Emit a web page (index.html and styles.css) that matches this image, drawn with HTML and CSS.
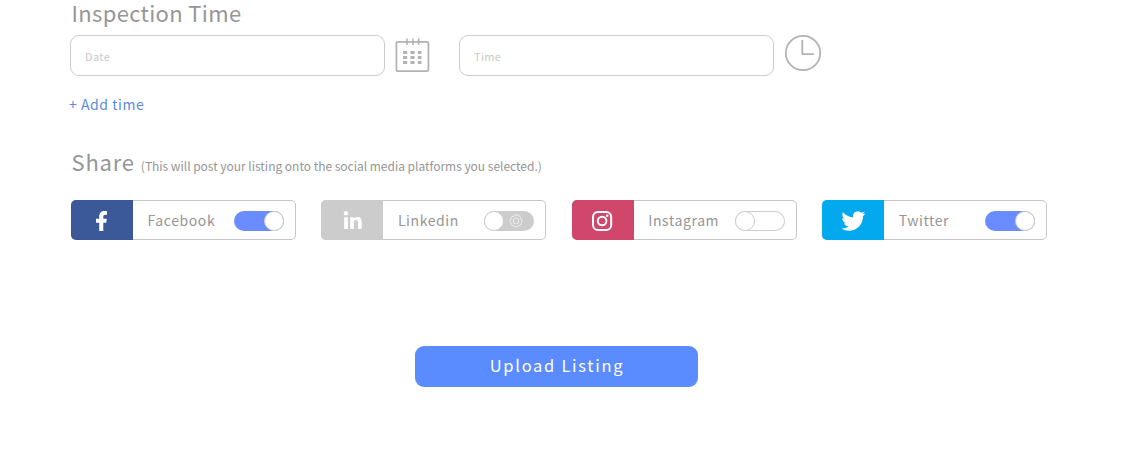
FILE: index.html
```html
<!DOCTYPE html>
<html lang="en">
<head>
<meta charset="utf-8">
<title>Listing</title>
<link rel="stylesheet" href="styles.css">
</head>
<body>
<main class="page">
  <h2 class="heading">Inspection Time</h2>
  <div class="fields">
    <input class="field" type="text" placeholder="Date" aria-label="Date">
    <svg class="calendar" width="36" height="36" viewBox="0 0 36 36" fill="none" stroke="#b3b3b3">
      <rect x="1.400" y="4.800" width="32" height="29.400" rx="1.500" stroke-width="1.800"/>
      <path d="M12 1.500v6.500M18 1.500v6.500M23.700 1.500v6.500" stroke-width="1.600"/>
      <path d="M8 15.600h18.500M8 20.600h18.500M8 25.600h18.500" stroke-width="3" stroke-dasharray="4.200 3.200"/>
    </svg>
    <input class="field" type="text" placeholder="Time" aria-label="Time">
    <svg class="clock" width="38" height="38" viewBox="0 0 38 38" fill="none" stroke="#b3b3b3" stroke-width="1.800">
      <circle cx="19" cy="19" r="17.200"/>
      <path d="M18.300 6v14.200h11.500"/>
    </svg>
  </div>
  <a class="add">+ Add time</a>
  <div class="share">
    <h2 class="heading wide">Share</h2>
    <p class="note">(This will post your listing onto the social media platforms you selected.)</p>
  </div>
  <div class="networks">
    <div class="network">
      <div class="brand facebook">
        <svg width="62" height="40" viewBox="0 0 62 40" fill="#fff"><path d="M28.200 31V22.800h-3.200v-4h3.200v-2.200c0-3.700 2-5.600 5.300-5.600 1 0 2 .1 2.500.2v3.500h-1.700c-1.500 0-2 .8-2 1.900v2.200h3.500l-.6 4h-2.900V31z"/></svg>
      </div>
      <span class="name">Facebook</span>
      <span class="toggle on"></span>
    </div>
    <div class="network">
      <div class="brand linkedin">
        <svg width="62" height="40" viewBox="0 0 62 40" fill="#fff"><circle cx="25" cy="13.200" r="2.200"/><path d="M23.200 17.200h3.700V29h-3.700zM29.200 17.200h3.600v1.600c.7-1.200 2-1.900 3.600-1.900 3.500 0 4.300 2.200 4.300 5.300V29H37v-6c0-1.600-.2-3-2-3s-2.200 1.300-2.200 2.900V29h-3.600z"/></svg>
      </div>
      <span class="name">Linkedin</span>
      <span class="toggle pending">
        <svg class="gear" width="14" height="14" viewBox="0 0 14 14" fill="none" stroke="#f2f2f2" stroke-width=".9"><path d="M5.700 1.200Q7 .3 8.300 1.200L8.700 2.100 9.700 1.600Q11.300 2 11.500 3.500L11.200 4.600 12.300 4.900Q13.400 6 12.900 7.500L12 8.300 12.500 9.300Q12.300 11 10.700 11.500L9.600 11.300 9 12.300Q7.500 13.300 6 12.600L5.200 11.600 4.100 12Q2.500 11.700 2.100 10.200L2.400 9.100 1.400 8.600Q.5 7.200 1.200 5.700L2.200 5.100 2 4Q2.500 2.400 4 2.100L5.100 2.300z"/><circle cx="7" cy="7" r="2.900"/></svg>
      </span>
    </div>
    <div class="network">
      <div class="brand instagram">
        <svg width="62" height="40" viewBox="0 0 62 40" fill="none" stroke="#fff"><rect x="21" y="12" width="18.200" height="18" rx="5" stroke-width="2"/><circle cx="30.100" cy="21" r="4.300" stroke-width="2"/><circle cx="35.200" cy="15.800" r="1.300" fill="#fff" stroke="none"/></svg>
      </div>
      <span class="name">Instagram</span>
      <span class="toggle off"></span>
    </div>
    <div class="network">
      <div class="brand twitter">
        <svg width="62" height="40" viewBox="0 0 62 40"><path fill="#fff" transform="translate(19.400 9)" d="M23.950 4.570a10 10 0 01-2.820.77 4.960 4.960 0 002.160-2.720c-.95.55-2 .96-3.130 1.190a4.920 4.920 0 00-8.380 4.480C7.690 8.090 4.070 6.130 1.640 3.160a4.820 4.820 0 00-.67 2.480c0 1.710.87 3.210 2.190 4.100a4.900 4.900 0 01-2.230-.62v.06a4.920 4.920 0 003.950 4.830 5 5 0 01-2.210.08 4.940 4.940 0 004.600 3.420A9.870 9.870 0 010 19.540a13.990 13.990 0 007.550 2.210c9.050 0 14-7.500 14-13.980 0-.21 0-.42-.02-.63a9.940 9.940 0 002.460-2.550z"/></svg>
      </div>
      <span class="name">Twitter</span>
      <span class="toggle on"></span>
    </div>
  </div>
  <button class="upload" type="button">Upload Listing</button>
</main>
</body>
</html>
```

FILE: styles.css
```css
*, *::before { box-sizing: border-box; }
body {
  margin: 0;
  background: #fff;
  color: #969696;
  font-family: "Noto Sans CJK SC", "Noto Sans", sans-serif;
}
.page {
  height: 450px;
  padding-left: 70px;
}
.heading {
  margin: 0;
  padding-left: 1.500px;
  font-size: 22px;
  font-weight: 400;
  line-height: 24px;
  letter-spacing: .35px;
}
.wide { letter-spacing: .8px; }
.fields {
  display: flex;
  margin-top: 11px;
}
.field {
  width: 315px;
  height: 41px;
  padding: 1px 14px 0;
  border: 1px solid #ccc;
  border-radius: 9px;
  outline: none;
  font: 11px "Noto Sans CJK SC", sans-serif;
  letter-spacing: .35px;
}
.field::placeholder { color: #c9c9c9; }
.calendar { margin: 2px 28px 0 10px; }
.clock { margin: -1px 0 0 10px; }
.add {
  display: block;
  margin: 17px 0 0 -1px;
  color: #5b8be0;
  font-size: 14px;
  line-height: 22px;
  letter-spacing: .55px;
}
.share {
  display: flex;
  gap: 6px;
  margin-top: 34px;
}
.note {
  margin: 7px 0 0;
  font-size: 12px;
  line-height: 20px;
  letter-spacing: -.020px;
}
.networks {
  display: flex;
  gap: 25.400px;
  margin: 24px 0 0 1px;
}
.network {
  display: flex;
  align-items: center;
  width: 225px;
  height: 40px;
  border-radius: 5px;
  box-shadow: inset 0 0 0 1px #c6c6c6;
  overflow: hidden;
}
.brand {
  width: 62px;
  height: 40px;
}
.brand svg { display: block; }
.facebook { background: #3b5998; }
.linkedin { background: #ccc; }
.instagram { background: #d0476b; }
.twitter { background: #03a9ee; }
.name {
  padding-left: 14.500px;
  font-size: 14px;
  line-height: 22px;
  letter-spacing: .6px;
}
.toggle {
  display: flex;
  align-items: center;
  width: 50px;
  height: 20px;
  margin: 2px 12px 0 auto;
  border-radius: 10px;
  background: #ccc;
}
.toggle::before {
  content: "";
  flex: none;
  width: 20px;
  height: 20px;
  border: 1px solid #ccc;
  border-radius: 50%;
  background: #fff;
}
.on { justify-content: flex-end; background: #6b8cff; }
.off { background: #fff; box-shadow: inset 0 0 0 1px #ccc; }
.gear { margin-left: 5px; }
.upload {
  display: block;
  width: 283px;
  height: 41px;
  margin: 106px 0 0 345px;
  padding: 0 0 4px 1px;
  border: 0;
  border-radius: 9px;
  background: #5b8cff;
  color: #fff;
  font: 16.500px/24px "Noto Sans CJK SC", sans-serif;
  letter-spacing: 1.700px;
}
```
